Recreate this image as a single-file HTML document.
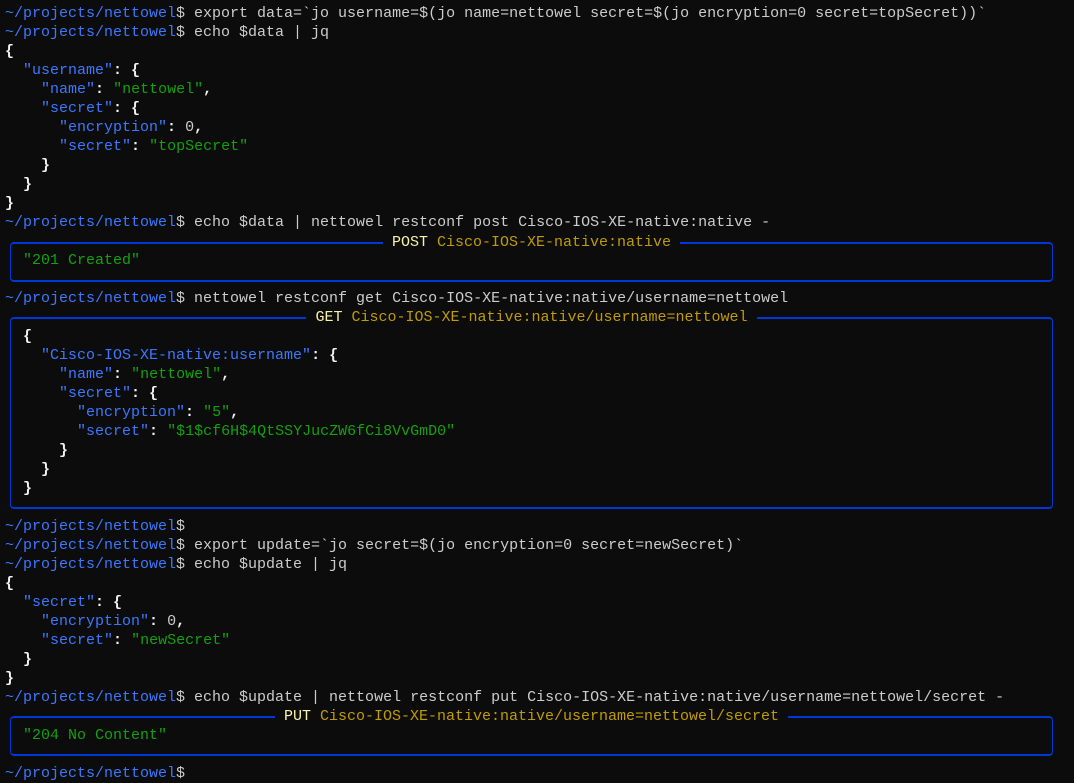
<!DOCTYPE html>
<html><head><meta charset="utf-8"><style>
html,body{margin:0;padding:0;background:#0c0c0c;width:1074px;height:783px;overflow:hidden}
pre{position:absolute;left:5px;top:4px;margin:0;font-family:"Liberation Mono",monospace;font-size:15px;line-height:19px;color:#cccccc;white-space:pre}
.p{color:#3b78ff}
.k{color:#3b78ff}
.s{color:#13a10e}
.b{color:#f2f2f2;font-weight:bold}
.box{position:absolute;left:10px;width:1043px;border-top:2px solid #0037da;border-bottom:2px solid #0037da;border-left:1.5px solid #0037da;border-right:1.5px solid #0037da;border-radius:4px;box-sizing:border-box}
.t{position:absolute;top:-11px;left:0;right:0;text-align:center;font-family:"Liberation Mono",monospace;font-size:15px;line-height:19px}
.t span.w{background:#0c0c0c;padding:0 9px;color:#c19c00}
.t b{color:#f9f1a5;font-weight:normal}
</style></head><body>
<div class="box" style="top:242px;height:40px"><div class="t"><span class="w"><b>POST</b> Cisco-IOS-XE-native:native</span></div></div>
<div class="box" style="top:317px;height:192px"><div class="t"><span class="w"><b>GET</b> Cisco-IOS-XE-native:native/username=nettowel</span></div></div>
<div class="box" style="top:716px;height:40px"><div class="t"><span class="w"><b>PUT</b> Cisco-IOS-XE-native:native/username=nettowel/secret</span></div></div>
<pre><span class="p">~/projects/nettowel</span>$ export data=`jo username=$(jo name=nettowel secret=$(jo encryption=0 secret=topSecret))`
<span class="p">~/projects/nettowel</span>$ echo $data | jq
<span class="b">{</span>
  <span class="k">"username"</span><span class="b">: {</span>
    <span class="k">"name"</span><span class="b">:</span> <span class="s">"nettowel"</span><span class="b">,</span>
    <span class="k">"secret"</span><span class="b">: {</span>
      <span class="k">"encryption"</span><span class="b">:</span> 0<span class="b">,</span>
      <span class="k">"secret"</span><span class="b">:</span> <span class="s">"topSecret"</span>
    <span class="b">}</span>
  <span class="b">}</span>
<span class="b">}</span>
<span class="p">~/projects/nettowel</span>$ echo $data | nettowel restconf post Cisco-IOS-XE-native:native -

  <span class="s">"201 Created"</span>

<span class="p">~/projects/nettowel</span>$ nettowel restconf get Cisco-IOS-XE-native:native/username=nettowel

  <span class="b">{</span>
    <span class="k">"Cisco-IOS-XE-native:username"</span><span class="b">: {</span>
      <span class="k">"name"</span><span class="b">:</span> <span class="s">"nettowel"</span><span class="b">,</span>
      <span class="k">"secret"</span><span class="b">: {</span>
        <span class="k">"encryption"</span><span class="b">:</span> <span class="s">"5"</span><span class="b">,</span>
        <span class="k">"secret"</span><span class="b">:</span> <span class="s">"$1$cf6H$4QtSSYJucZW6fCi8VvGmD0"</span>
      <span class="b">}</span>
    <span class="b">}</span>
  <span class="b">}</span>

<span class="p">~/projects/nettowel</span>$
<span class="p">~/projects/nettowel</span>$ export update=`jo secret=$(jo encryption=0 secret=newSecret)`
<span class="p">~/projects/nettowel</span>$ echo $update | jq
<span class="b">{</span>
  <span class="k">"secret"</span><span class="b">: {</span>
    <span class="k">"encryption"</span><span class="b">:</span> 0<span class="b">,</span>
    <span class="k">"secret"</span><span class="b">:</span> <span class="s">"newSecret"</span>
  <span class="b">}</span>
<span class="b">}</span>
<span class="p">~/projects/nettowel</span>$ echo $update | nettowel restconf put Cisco-IOS-XE-native:native/username=nettowel/secret -

  <span class="s">"204 No Content"</span>

<span class="p">~/projects/nettowel</span>$ </pre>
</body></html>
